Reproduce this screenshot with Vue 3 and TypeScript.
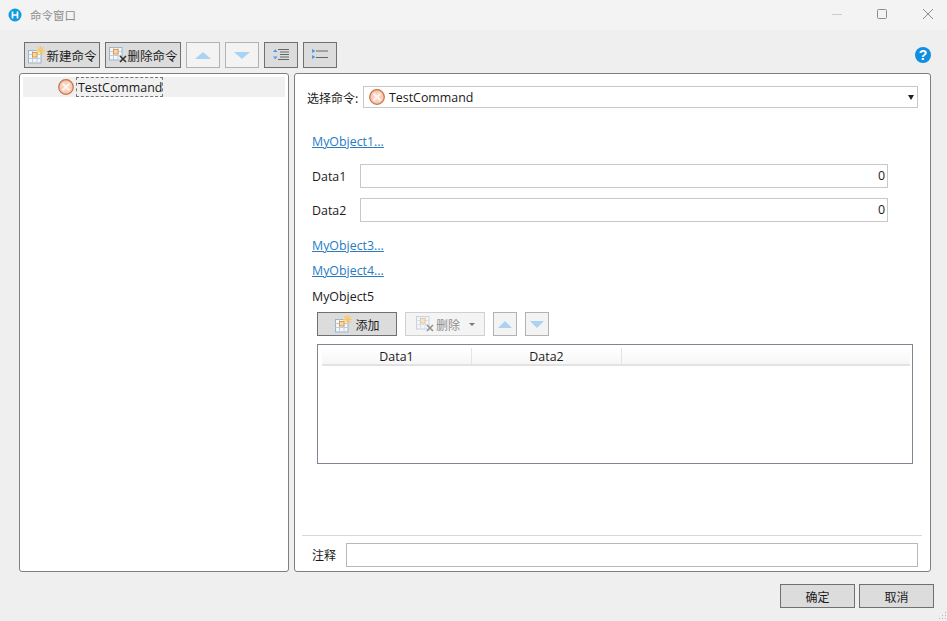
<script setup lang="ts">
const links = ['MyObject3...', 'MyObject4...'];
const dataRows = ['Data1', 'Data2'];
</script>

<template>
  <div class="win">
    <svg width="0" height="0" class="defs">
      <defs>
        <symbol id="err" viewBox="0 0 16 16">
          <circle cx="8" cy="8" r="7.300" fill="#f6c6b2" stroke="#c8703e" stroke-width="1.200" />
          <circle cx="8" cy="8" r="5.600" fill="#f8cfbf" />
          <path d="M4.600 4.600l6.800 6.800M11.400 4.600l-6.800 6.800" stroke="#fdf1ec" stroke-width="2.400" />
        </symbol>
        <symbol id="tb" viewBox="0 0 18 18">
          <rect x="1.500" y="4.500" width="12.500" height="12.500" fill="#f2f7fb" stroke="#9db3c8" />
          <path d="M1.500 8.500h12.500M1.500 12.500h12.500M5.500 4.500v12.500M10 4.500v12.500" stroke="#bccddd" />
          <rect x="5.500" y="6.500" width="4.500" height="4.500" fill="#f8d6a8" stroke="#e09a4e" />
        </symbol>
        <symbol id="spark" viewBox="0 0 9 9">
          <path d="M4.500 0v9M0 4.500h9M1.300 1.300l6.400 6.400M7.700 1.300L1.300 7.700" stroke="#f7c95c" stroke-width="1.200" />
        </symbol>
        <symbol id="cross" viewBox="0 0 8 8">
          <path d="M1 1l6 6M7 1L1 7" stroke="#333" stroke-width="1.600" />
        </symbol>
      </defs>
    </svg>

    <header class="titlebar">
      <svg class="logo" width="14" height="14" viewBox="0 0 14 14">
        <circle cx="7" cy="7" r="6.500" fill="#0f9be3" />
        <path d="M4.500 3.500v7M9.500 3.500v7M4.500 7h5" stroke="#fff" stroke-width="1.700" />
      </svg>
      <span class="wtitle">命令窗口</span>
      <div class="wctl">
        <svg width="46" height="30" viewBox="0 0 46 30"><path d="M19 14.500h10" stroke="#ccc" /></svg>
        <svg width="46" height="30" viewBox="0 0 46 30"><rect x="18.500" y="9.500" width="9" height="9" rx="1" fill="none" stroke="#8c8c8c" /></svg>
        <svg width="46" height="30" viewBox="0 0 46 30"><path d="M18 9l10 10M28 9l-10 10" stroke="#8c8c8c" /></svg>
      </div>
    </header>

    <div class="toolbar">
      <button class="btn tbtn wide">
        <span class="ico"><svg width="18" height="18"><use href="#tb" /></svg><svg class="spark" width="9" height="9"><use href="#spark" /></svg></span>
        新建命令
      </button>
      <button class="btn tbtn wide">
        <span class="ico del"><svg width="18" height="18"><use href="#tb" /></svg><svg class="xmark" width="8" height="8"><use href="#cross" /></svg></span>
        删除命令
      </button>
      <button class="btn tbtn sq off"><i class="tri up"></i></button>
      <button class="btn tbtn sq off"><i class="tri down"></i></button>
      <button class="btn tbtn sq">
        <svg width="18" height="14" viewBox="0 0 18 14">
          <path d="M1 4h4.500L3.250 1.200zM1 8.500h4.500L3.250 11.300z" fill="#4c9be8" />
          <path d="M6 1.500h11M8 4h9M8 6.500h9M8 9h9M6 11.500h11" stroke="#666" />
        </svg>
      </button>
      <button class="btn tbtn sq">
        <svg width="18" height="14" viewBox="0 0 18 14">
          <path d="M1 1l3.500 2L1 5zM1 7l3.500 2L1 11z" fill="#4c9be8" />
          <path d="M5 3h12M5 9.500h12" stroke="#666" />
        </svg>
      </button>
      <svg class="help" width="16" height="16" viewBox="0 0 16 16">
        <circle cx="8" cy="8" r="8" fill="#0f8fe0" />
        <text x="8" y="13" text-anchor="middle" class="qm">?</text>
      </svg>
    </div>

    <main class="panels">
      <section class="panel tree">
        <div class="tree-row">
          <svg class="erricon" width="16" height="16"><use href="#err" /></svg>
          <span class="focus">TestCommand</span>
        </div>
      </section>

      <section class="panel detail">
        <div class="pick">
          <label>选择命令:</label>
          <div class="combo">
            <svg width="16" height="16"><use href="#err" /></svg>
            <span>TestCommand</span>
            <i class="caret"></i>
          </div>
        </div>

        <a class="link first">MyObject1...</a>

        <div v-for="row in dataRows" :key="row" class="field">
          <span class="flabel">{{ row }}</span>
          <div class="numbox">0</div>
        </div>

        <a v-for="l in links" :key="l" class="link stacked">{{ l }}</a>

        <div class="obj5">MyObject5</div>

        <div class="subbar">
          <button class="btn addbtn">
            <span class="ico"><svg width="18" height="18"><use href="#tb" /></svg><svg class="spark" width="9" height="9"><use href="#spark" /></svg></span>
            添加
          </button>
          <button class="btn delbtn">
            <span class="ico del faded"><svg width="18" height="18"><use href="#tb" /></svg><svg class="xmark" width="8" height="8"><use href="#cross" /></svg></span>
            删除
            <i class="minicaret"></i>
          </button>
          <button class="btn smbtn"><i class="tri up"></i></button>
          <button class="btn smbtn"><i class="tri down"></i></button>
        </div>

        <div class="grid">
          <div class="ghead">
            <div class="gcol">Data1</div>
            <div class="gcol">Data2</div>
            <div class="gfill"></div>
          </div>
        </div>

        <div class="spacer"></div>

        <div class="note">
          <span>注释</span>
          <div class="notebox"></div>
        </div>
      </section>
    </main>

    <footer class="foot">
      <button class="btn fbtn">确定</button>
      <button class="btn fbtn">取消</button>
      <svg class="grip" width="10" height="10" viewBox="0 0 10 10">
        <path d="M8 1h1v1H8zM5 4h1v1H5zM8 4h1v1H8zM2 7h1v1H2zM5 7h1v1H5zM8 7h1v1H8z" fill="#b5b5b5" />
      </svg>
    </footer>
  </div>
</template>

<style scoped>
* { box-sizing: border-box; }

.defs { position: absolute; }

.win {
  width: 947px; height: 621px; display: flex; flex-direction: column;
  background: #efefef; color: #1a1a1a; overflow: hidden; position: relative;
  font-family: "Open Sans", "Noto Sans CJK SC", sans-serif; font-size: 12.400px;
}

.titlebar { height: 30px; background: #f3f3f3; display: flex; align-items: center; padding-left: 8px; }
.logo { margin-right: 8px; }
.wtitle { color: #8f8f8f; font-size: 11.500px; font-family: "Noto Sans CJK SC", sans-serif; }
.wctl { margin-left: auto; margin-right: -4px; display: flex; }

.btn {
  font: inherit; color: #1a1a1a; background: #dcdcdc; border: 1px solid #707070;
  padding: 0; display: flex; align-items: center; justify-content: center;
}

.toolbar { height: 38px; padding: 12px 16px 0 24px; display: flex; gap: 5px; align-items: flex-start; }
.tbtn { height: 26px; }
.wide { width: 76px; font-family: "Noto Sans CJK SC", sans-serif; font-size: 12.500px; }
.sq { width: 34px; }
.off { background: #f3f3f3; border-color: #b2b2b2; }
.help { margin-left: auto; margin-top: 5px; }
.qm { fill: #fff; font-size: 14px; font-weight: 700; font-family: "Liberation Sans", sans-serif; }

.ico { position: relative; width: 18px; height: 18px; display: block; flex: none; margin-right: 1px; }
.ico svg { display: block; }
.ico .spark { position: absolute; right: 0; top: 0; }
.ico .xmark { position: absolute; right: -1px; bottom: 1px; }
.ico.del svg:first-child { transform: translateY(-3px); }
.faded { opacity: .5; }

.tri { width: 0; height: 0; border-left: 8px solid transparent; border-right: 8px solid transparent; display: block; }
.tri.up { border-bottom: 7px solid #a9d2f3; }
.tri.down { border-top: 7px solid #a9d2f3; }

.panels { flex: 1; min-height: 0; display: flex; gap: 5px; padding: 5px 16px 0 19px; }
.panel { background: #fff; border: 1px solid #7f7f7f; border-radius: 3px; height: 499px; }

.tree { width: 270px; padding: 3px; }
.tree-row { height: 20px; background: #f0f0f0; display: flex; align-items: center; padding-left: 35px; }
.erricon { margin-right: 2px; flex: none; }
.focus { height: 20px; line-height: 19px; border: 1px dashed #777; padding: 0 1px; width: 87px; }

.detail { flex: 1; padding: 12px 12px 4px 7px; display: flex; flex-direction: column; }
.pick { display: flex; align-items: center; height: 22px; margin-left: 5px; }
.pick label { width: 56px; font-family: "Noto Sans CJK SC", sans-serif; font-size: 12px; }
.combo {
  flex: 1; height: 22px; border: 1px solid #c8c8c8; display: flex; align-items: center; gap: 4px;
  padding-left: 5px; position: relative;
}
.caret {
  position: absolute; right: 3px; top: 8px; width: 0; height: 0;
  border-left: 3.500px solid transparent; border-right: 3.500px solid transparent; border-top: 5px solid #2a1a2e;
}

.link { color: #2a7bc4; text-decoration: underline; line-height: 18px; height: 18px; display: block; margin-left: 10px; }
.link.first { margin-top: 25px; margin-bottom: 13px; }
.link.stacked { margin-bottom: 7px; }

.field { display: flex; align-items: center; height: 24px; margin-left: 10px; margin-bottom: 10px; }
.flabel { width: 48px; }
.numbox {
  width: 528px; height: 24px; border: 1px solid #c8c8c8; text-align: right; padding-right: 2px;
  line-height: 22px;
}
.field + .link { margin-top: 5px; }

.obj5 { margin-left: 10px; margin-top: 1px; height: 18px; line-height: 18px; }

.subbar { display: flex; gap: 8px; margin: 6px 0 8px 15px; }
.addbtn { width: 80px; height: 24px; gap: 2px; font-family: "Noto Sans CJK SC", sans-serif; font-size: 12px; }
.delbtn {
  width: 80px; height: 24px; background: #f4f4f4; border-color: #d0d0d0; color: #8c8c8c; gap: 2px;
  font-family: "Noto Sans CJK SC", sans-serif; font-size: 12px;
}
.minicaret { width: 0; height: 0; margin-left: 7px; border-left: 3px solid transparent; border-right: 3px solid transparent; border-top: 3px solid #777; }
.smbtn { width: 24px; height: 24px; background: #f3f3f3; border-color: #b2b2b2; }
.smbtn .tri { border-left-width: 7px; border-right-width: 7px; }

.grid { width: 596px; height: 120px; margin-left: 15px; border: 1px solid #7d8590; padding: 3px 2px 0 4px; }
.ghead {
  display: flex; height: 18px; border-bottom: 2px solid #e2e2e2;
  background: linear-gradient(#fff, #f6f6f6);
}
.gcol { width: 150px; text-align: center; line-height: 17px; border-right: 1px solid #e4e4e4; }
.gfill { flex: 1; }

.spacer { flex: 1; }

.note {
  border-top: 1px solid #d8d8d8; margin-right: -4px; height: 32px; padding: 7px 4px 0 10px;
  display: flex; align-items: flex-start;
}
.note span { width: 34px; line-height: 24px; font-family: "Noto Sans CJK SC", sans-serif; font-size: 12px; }
.notebox { width: 572px; height: 24px; border: 1px solid #b8b8b8; }

.foot { height: 49px; display: flex; justify-content: flex-end; gap: 4px; padding: 12px 13px 0 0; position: relative; }
.fbtn { width: 75px; height: 24px; font-family: "Noto Sans CJK SC", sans-serif; font-size: 12px; }
.grip { position: absolute; right: 0; bottom: 0; }
</style>

<style>
html, body { margin: 0; background: #efefef; }
</style>
